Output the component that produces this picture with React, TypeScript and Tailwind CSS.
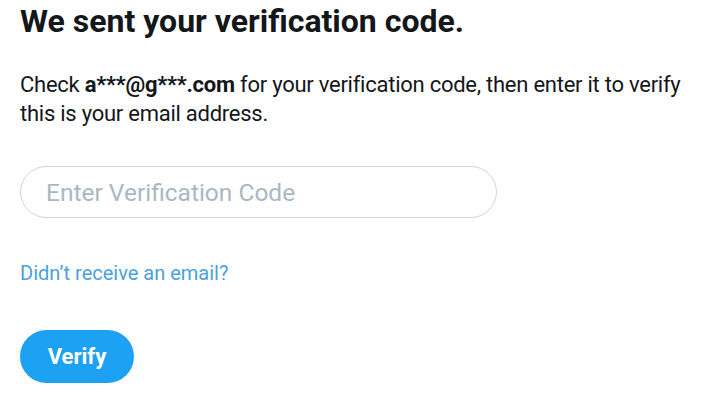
import { useState } from 'react'

export default function App() {
  const [code, setCode] = useState('')

  return (
    <div className="min-h-screen w-full bg-white font-['Roboto',sans-serif] text-[#14171a]">
      <div className="flex flex-col items-start px-5 pt-px">
        <h1 className="text-[32px] font-bold leading-[40px]">We sent your verification code.</h1>

        <p className="mt-[29px] max-w-[680px] text-[22px] leading-[29px] tracking-[-0.25px] text-[#14171a]">
          Check <span className="font-bold">a***@g***.com</span> for your verification code, then enter it to verify
          this is your email address.
        </p>

        <input
          value={code}
          onChange={(e) => setCode(e.target.value)}
          placeholder="Enter Verification Code"
          className="mt-[38px] h-[52px] w-[477px] rounded-full border border-[#ccd6dd] px-[25px] text-[24.5px] text-[#14171a] outline-none placeholder:text-[#aab8c2]"
        />

        <button className="mt-[42px] text-[20px] leading-[26px] text-[#4aa1de]">Didn’t receive an email?</button>

        <button className="mt-[44px] h-[53px] w-[114px] rounded-full bg-[#1da1f2] text-[22px] font-bold text-white">
          Verify
        </button>
      </div>
    </div>
  )
}
